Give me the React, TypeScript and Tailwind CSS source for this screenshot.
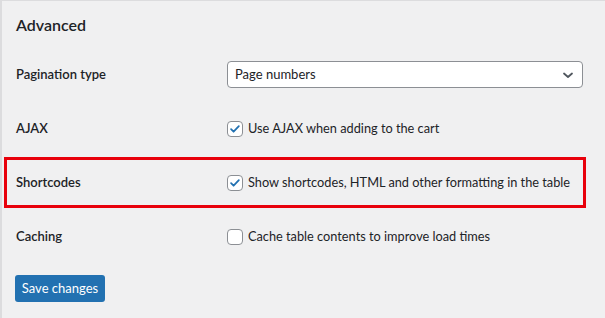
import React from 'react';

const font = { fontFamily: 'Lato, "Noto Sans", sans-serif' };

const Checkbox = ({ checked }: { checked: boolean }) => (
  <span className="flex h-4 w-4 shrink-0 items-center justify-center rounded-[4px] border border-[#8c8f94] bg-white">
    {checked && (
      <svg viewBox="0 0 16 16" className="h-3.5 w-3.5">
        <path d="M3.5 8.2l2.9 2.9 6-6.4" fill="none" stroke="#2271b1" strokeWidth="2" strokeLinecap="round" strokeLinejoin="round" />
      </svg>
    )}
  </span>
);

const Row = ({ label, highlight, children }: { label: string; highlight?: boolean; children: React.ReactNode }) => (
  <div
    className={`flex h-[51px] w-[582px] items-center border-[3px] pl-[9px] ${
      highlight ? 'border-[#e8000b]' : 'border-transparent'
    }`}
  >
    <div className="w-[211px] shrink-0 text-[13px] font-semibold text-[#1d2327]">{label}</div>
    {children}
  </div>
);

export default function App() {
  return (
    <div
      className="h-[318px] w-[605px] overflow-hidden border-l-2 border-t border-[#dcdcde] bg-[#f0f0f1] text-[#1d2327]"
      style={font}
    >
      <h2 className="pl-[14px] pt-[12px] text-[16px] font-semibold leading-[24px]">Advanced</h2>

      <div className="mt-[12px] flex flex-col gap-[3px] pl-[2px]">
        <Row label="Pagination type">
          <div className="flex h-[27px] w-[359px] items-center justify-between rounded-[4px] border border-[#8c8f94] bg-white pl-[7px] pr-[6px] text-[13px]">
            <span>Page numbers</span>
            <svg viewBox="0 0 16 16" className="h-4 w-4">
              <path d="M4 6.5l4 3.5 4-3.5" fill="none" stroke="#50575e" strokeWidth="1.8" strokeLinecap="round" strokeLinejoin="round" />
            </svg>
          </div>
        </Row>

        <Row label="AJAX">
          <label className="flex items-center gap-[5px] text-[12.75px]">
            <Checkbox checked />
            <span>Use AJAX when adding to the cart</span>
          </label>
        </Row>

        <Row label="Shortcodes" highlight>
          <label className="flex items-center gap-[5px] text-[12.75px]">
            <Checkbox checked />
            <span>Show shortcodes, HTML and other formatting in the table</span>
          </label>
        </Row>

        <Row label="Caching">
          <label className="flex items-center gap-[5px] text-[12.75px]">
            <Checkbox checked={false} />
            <span>Cache table contents to improve load times</span>
          </label>
        </Row>
      </div>

      <button className="ml-[13px] mt-[13px] h-[27px] w-[90px] rounded-[3px] bg-[#2271b1] text-[13px] text-white">
        Save changes
      </button>
    </div>
  );
}
